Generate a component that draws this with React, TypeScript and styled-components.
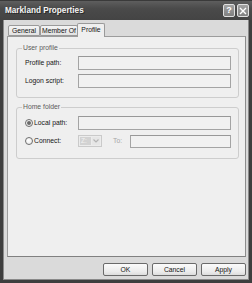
import React from "react";
import styled, { createGlobalStyle } from "styled-components";

const Global = createGlobalStyle`
  html, body { margin: 0; padding: 0; background: #d8d8d8; }
  body { font-family: "Liberation Sans", Arial, sans-serif; }
  * { box-sizing: border-box; }
`;

const Window = styled.div`
  width: 252px;
  height: 283px;
  display: flex;
  flex-direction: column;
  background: #dadada;
  overflow: hidden;
`;

const TitleBar = styled.div`
  height: 20px;
  flex: none;
  display: flex;
  align-items: center;
  padding: 0 3px 0 5px;
  background: linear-gradient(#5e5e5e, #4a4a4a 40%, #444444);
  border-top: 1px solid #3a3a3a;
`;

const Title = styled.span`
  flex: 1;
  color: #f4f4f4;
  font-weight: bold;
  font-size: 8.2px;
  line-height: 10px;
  text-shadow: 1px 1px 0 #2a2a2a;
  margin-top: 1px;
`;

const CaptionButton = styled.div`
  width: 12px;
  height: 13px;
  margin-left: 2px;
  border: 1px solid #e0e0e0;
  border-radius: 2px;
  background: linear-gradient(#a2a2a2, #808080);
  color: #ffffff;
  font-size: 9px;
  font-weight: bold;
  line-height: 11px;
  text-align: center;
  display: flex;
  align-items: center;
  justify-content: center;
`;

const Body = styled.div`
  flex: 1;
  display: flex;
  flex-direction: column;
  padding: 3px 3px 4px 4px;
  border-left: 3px solid #3e3e3e;
  border-right: 3px solid #3e3e3e;
  border-bottom: 3px solid #3e3e3e;
  box-shadow: inset 1px 0 0 #8a8a8a, inset -1px 0 0 #8a8a8a, inset 0 -1px 0 #8a8a8a;
`;

const TabRow = styled.div`
  height: 13px;
  display: flex;
  align-items: flex-end;
  padding-left: 1px;
`;

const Tab = styled.div<{ $w: number; $active?: boolean }>`
  position: relative;
  width: ${(p) => p.$w}px;
  height: ${(p) => (p.$active ? 14 : 11)}px;
  margin-bottom: ${(p) => (p.$active ? -1 : 0)}px;
  margin-left: ${(p) => (p.$active ? -1 : 0)}px;
  z-index: ${(p) => (p.$active ? 2 : 1)};
  border: 1px solid #9a9a9a;
  border-bottom: ${(p) => (p.$active ? "none" : "1px solid #9a9a9a")};
  border-radius: 2px 2px 0 0;
  background: ${(p) => (p.$active ? "#efefef" : "linear-gradient(#f4f4f4, #e2e2e2)")};
  color: #151515;
  font-size: 6.8px;
  line-height: ${(p) => (p.$active ? 10 : 9)}px;
  text-align: center;
  padding-top: ${(p) => (p.$active ? 1 : 0)}px;
  white-space: nowrap;
`;

const Panel = styled.div`
  flex: 1;
  display: flex;
  flex-direction: column;
  gap: 9px;
  padding: 11px 6px 0 8px;
  background: #efefef;
  border: 1px solid #9c9c9c;
  border-bottom-color: #808080;
  border-right-color: #8c8c8c;
`;

const Group = styled.div<{ $pt: number; $pb: number }>`
  position: relative;
  display: grid;
  row-gap: 4px;
  padding: ${(p) => p.$pt}px 7px ${(p) => p.$pb}px 8px;
  border: 1px solid #cdcdcd;
  border-radius: 3px;
`;

const Legend = styled.span`
  position: absolute;
  top: -5px;
  left: 5px;
  padding: 0 1px;
  background: #efefef;
  color: #5c5c5c;
  font-size: 6.8px;
  line-height: 8px;
`;

const Row = styled.div`
  display: grid;
  grid-template-columns: 53px 1fr;
  align-items: center;
  height: 14px;
`;

const Label = styled.span<{ $muted?: boolean }>`
  font-size: 6.8px;
  line-height: 8px;
  color: ${(p) => (p.$muted ? "#a6a6a6" : "#151515")};
  white-space: nowrap;
`;

const TextBox = styled.div<{ $h?: number; $grow?: boolean }>`
  height: ${(p) => p.$h ?? 14}px;
  flex: ${(p) => (p.$grow ? 1 : "none")};
  background: #f1f1f1;
  border: 1px solid #a4a4a4;
  border-top-color: #989898;
`;

const RadioLabel = styled.label`
  display: flex;
  align-items: center;
  gap: 1px;
`;

const Radio = styled.span<{ $checked?: boolean }>`
  width: 8px;
  height: 8px;
  border-radius: 50%;
  border: 1px solid #6e6e6e;
  background: radial-gradient(circle at 40% 40%, #ffffff, #e4e4e4);
  display: flex;
  align-items: center;
  justify-content: center;
  &::after {
    content: "";
    display: ${(p) => (p.$checked ? "block" : "none")};
    width: 4px;
    height: 4px;
    border-radius: 50%;
    background: #6a6a6a;
  }
`;

const ConnectLine = styled.div`
  display: flex;
  align-items: center;
`;

const Combo = styled.div`
  width: 24px;
  height: 12px;
  display: flex;
  align-items: center;
  gap: 1px;
  padding: 1px;
  border: 1px solid #cacaca;
  background: #ececec;
  margin-right: 11px;
`;

const ComboValue = styled.span`
  width: 11px;
  height: 8px;
  background: #d2d2d2;
  color: #f2f2f2;
  font-size: 6.5px;
  line-height: 8px;
  padding-left: 1px;
`;

const ComboArrow = styled.span`
  flex: 1;
  height: 8px;
  display: flex;
  align-items: center;
  justify-content: center;
  background: #e6e6e6;
  border-radius: 1px;
`;

const ToLabel = styled(Label)`
  width: 17px;
`;

const ButtonRow = styled.div`
  display: flex;
  justify-content: flex-end;
  gap: 4px;
  margin-top: 6px;
`;

const Button = styled.button`
  width: 45px;
  height: 13px;
  padding: 0;
  border: 1px solid #6a6a6a;
  border-radius: 2px;
  background: linear-gradient(#fbfbfb, #ebebeb 70%, #dcdcdc);
  font-family: "Liberation Sans", Arial, sans-serif;
  font-size: 6.8px;
  line-height: 11px;
  color: #151515;
`;

export default function App() {
  return (
    <>
      <Global />
      <Window>
        <TitleBar>
          <Title>Markland Properties</Title>
          <CaptionButton>?</CaptionButton>
          <CaptionButton>
            <svg width="8" height="8" viewBox="0 0 8 8">
              <path d="M1 1 L7 7 M7 1 L1 7" stroke="#ffffff" strokeWidth="1.4" />
            </svg>
          </CaptionButton>
        </TitleBar>
        <Body>
          <TabRow>
            <Tab $w={32}>General</Tab>
            <Tab $w={38}>Member Of</Tab>
            <Tab $w={28} $active>Profile</Tab>
          </TabRow>
          <Panel>
            <Group $pt={7} $pb={9}>
              <Legend>User profile</Legend>
              <Row>
                <Label>Profile path:</Label>
                <TextBox />
              </Row>
              <Row>
                <Label>Logon script:</Label>
                <TextBox />
              </Row>
            </Group>
            <Group $pt={8} $pb={10}>
              <Legend>Home folder</Legend>
              <Row>
                <RadioLabel>
                  <Radio $checked />
                  <Label>Local path:</Label>
                </RadioLabel>
                <TextBox />
              </Row>
              <Row>
                <RadioLabel>
                  <Radio />
                  <Label>Connect:</Label>
                </RadioLabel>
                <ConnectLine>
                  <Combo>
                    <ComboValue>Z:</ComboValue>
                    <ComboArrow>
                      <svg width="6" height="4" viewBox="0 0 6 4">
                        <path d="M0.5 0.5 L3 3 L5.5 0.5" stroke="#b4b4b4" strokeWidth="1.2" fill="none" />
                      </svg>
                    </ComboArrow>
                  </Combo>
                  <ToLabel $muted>To:</ToLabel>
                  <TextBox $h={13} $grow />
                </ConnectLine>
              </Row>
            </Group>
          </Panel>
          <ButtonRow>
            <Button>OK</Button>
            <Button>Cancel</Button>
            <Button>Apply</Button>
          </ButtonRow>
        </Body>
      </Window>
    </>
  );
}
